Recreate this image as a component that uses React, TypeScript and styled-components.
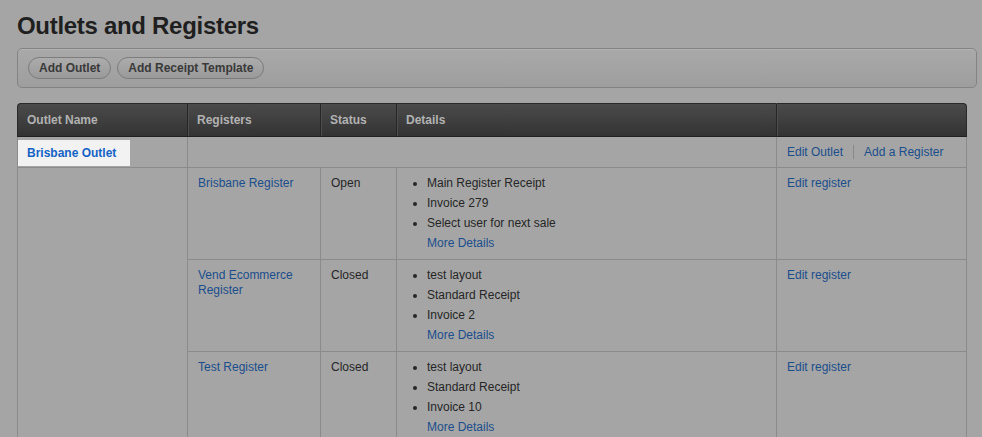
import React from 'react';
import styled, { createGlobalStyle } from 'styled-components';

const GlobalStyle = createGlobalStyle`
  html, body {
    margin: 0;
    padding: 0;
    background: #a5a5a5;
    font-family: "Liberation Sans", Arial, sans-serif;
    font-size: 12px;
    color: #262626;
  }
`;

const Page = styled.div`
  padding: 12px 5px 0 17px;
  height: 437px;
  box-sizing: border-box;
  overflow: hidden;
`;

const Title = styled.h1`
  margin: 0 0 9px;
  font-size: 24px;
  line-height: 27px;
  letter-spacing: -0.3px;
  font-weight: bold;
  color: #1f1f1f;
`;

const Toolbar = styled.div`
  display: flex;
  gap: 6px;
  align-items: center;
  padding: 8px 10px;
  border: 1px solid #838383;
  border-radius: 5px;
  background: linear-gradient(#a9a9a9, #9e9e9e);
  box-shadow: inset 0 1px 0 rgba(255, 255, 255, 0.12);
  margin-bottom: 15px;
`;

const ToolButton = styled.button`
  height: 22px;
  padding: 0 10px;
  border: 1px solid #7c7c7c;
  border-radius: 11px;
  background: linear-gradient(#acacac, #9a9a9a);
  color: #393939;
  font-family: inherit;
  font-size: 12px;
  font-weight: bold;
  cursor: pointer;
`;

const Table = styled.table`
  width: 950px;
  border-collapse: separate;
  border-spacing: 0;
  table-layout: fixed;
`;

const HeadCell = styled.th<{ w: number; first?: boolean; last?: boolean }>`
  width: ${p => p.w}px;
  height: 34px;
  box-sizing: border-box;
  padding: 0 9px;
  text-align: left;
  font-weight: bold;
  font-size: 12px;
  color: #b2b2b2;
  background: linear-gradient(#4b4b4b, #333333);
  border-top: 1px solid #2a2a2a;
  border-bottom: 1px solid #202020;
  border-left: 1px solid ${p => (p.first ? '#2a2a2a' : '#262626')};
  box-shadow: inset 1px 0 0 ${p => (p.first ? 'transparent' : '#4e4e4e')};
  ${p => (p.last ? 'border-right: 1px solid #2a2a2a;' : '')}
  border-top-left-radius: ${p => (p.first ? '4px' : '0')};
  border-top-right-radius: ${p => (p.last ? '4px' : '0')};
`;

const Cell = styled.td<{ last?: boolean; noBottom?: boolean }>`
  vertical-align: top;
  padding: 5px 10px 6px;
  line-height: 20px;
  border-left: 1px solid #8b8b8b;
  border-bottom: ${p => (p.noBottom ? 'none' : '1px solid #8b8b8b')};
  ${p => (p.last ? 'border-right: 1px solid #8b8b8b;' : '')}
`;

const OutletRowCell = styled(Cell)`
  padding: 5px 10px;
`;

const OutletCell = styled.td`
  padding: 2px 0 1px 0;
  border-left: 1px solid #8b8b8b;
  border-bottom: 1px solid #8b8b8b;
  vertical-align: middle;
`;

const Highlight = styled.span`
  display: inline-block;
  height: 26px;
  line-height: 26px;
  padding: 0 14px 0 9px;
  background: #f2f2f2;
  font-weight: bold;
  color: #1462c6;
`;

const Link = styled.a`
  color: #1b4e8c;
  text-decoration: none;
  cursor: pointer;
`;

const NameLink = styled(Link)`
  display: block;
  line-height: 15px;
  margin-top: 3px;
`;

const Actions = styled.div`
  display: flex;
  align-items: center;
`;

const Divider = styled.span`
  width: 1px;
  height: 14px;
  margin: 0 10px;
  background: #8a8a8a;
`;

const List = styled.ul`
  margin: 0;
  padding-left: 20px;
  list-style: disc;
`;

const MoreRow = styled.div`
  padding-left: 20px;
`;

interface Register {
  name: string;
  status: string;
  details: string[];
}

const registers: Register[] = [
  { name: 'Brisbane Register', status: 'Open', details: ['Main Register Receipt', 'Invoice 279', 'Select user for next sale'] },
  { name: 'Vend Ecommerce Register', status: 'Closed', details: ['test layout', 'Standard Receipt', 'Invoice 2'] },
  { name: 'Test Register', status: 'Closed', details: ['test layout', 'Standard Receipt', 'Invoice 10'] },
];

const App: React.FC = () => {
  return (
    <Page>
      <GlobalStyle />
      <Title>Outlets and Registers</Title>
      <Toolbar>
        <ToolButton>Add Outlet</ToolButton>
        <ToolButton>Add Receipt Template</ToolButton>
      </Toolbar>
      <Table>
        <thead>
          <tr>
            <HeadCell w={170} first>Outlet Name</HeadCell>
            <HeadCell w={133}>Registers</HeadCell>
            <HeadCell w={76}>Status</HeadCell>
            <HeadCell w={380}>Details</HeadCell>
            <HeadCell w={191} last></HeadCell>
          </tr>
        </thead>
        <tbody>
          <tr>
            <OutletCell>
              <Highlight>Brisbane Outlet</Highlight>
            </OutletCell>
            <OutletRowCell colSpan={3} />
            <OutletRowCell last>
              <Actions>
                <Link>Edit Outlet</Link>
                <Divider />
                <Link>Add a Register</Link>
              </Actions>
            </OutletRowCell>
          </tr>
          {registers.map((r, i) => (
            <tr key={r.name}>
              {i === 0 && <Cell rowSpan={registers.length} noBottom />}
              <Cell>
                <NameLink>{r.name}</NameLink>
              </Cell>
              <Cell>{r.status}</Cell>
              <Cell>
                <List>
                  {r.details.map(d => (
                    <li key={d}>{d}</li>
                  ))}
                </List>
                <MoreRow>
                  <Link>More Details</Link>
                </MoreRow>
              </Cell>
              <Cell last>
                <Link>Edit register</Link>
              </Cell>
            </tr>
          ))}
        </tbody>
      </Table>
    </Page>
  );
};

export default App;
